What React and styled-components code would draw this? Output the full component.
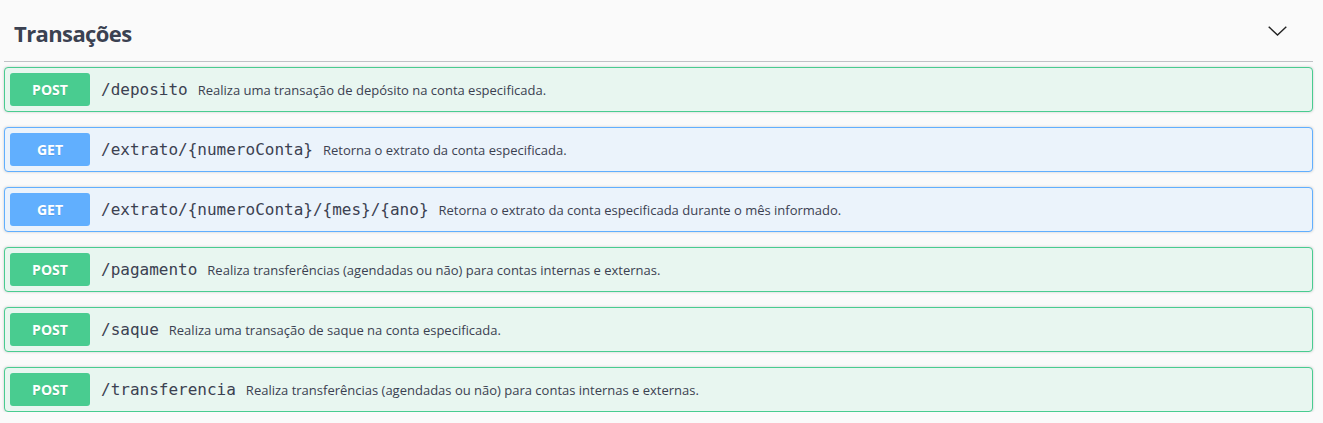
import React from "react";
import styled, { createGlobalStyle } from "styled-components";

const GlobalStyle = createGlobalStyle`
  html, body {
    margin: 0;
    padding: 0;
    background: #fafafa;
  }
  body {
    font-family: "Open Sans", "Noto Sans", sans-serif;
    color: #3b4151;
  }
`;

const colors = {
  POST: { main: "#49cc90", bg: "#e8f6f0" },
  GET: { main: "#61affe", bg: "#ebf3fb" },
};

const Section = styled.section`
  padding: 0 10px 0 4px;
`;

const TagHeader = styled.div`
  display: flex;
  align-items: center;
  justify-content: space-between;
  height: 61px;
  border-bottom: 1px solid rgba(59, 65, 81, 0.3);
  margin-bottom: 5px;
  padding: 0 26px 0 10px;
`;

const TagTitle = styled.h3`
  margin: 0;
  padding-top: 5px;
  font-size: 22px;
  font-weight: 700;
  letter-spacing: -0.6px;
  color: #3b4151;
`;

const Expand = styled.button`
  border: none;
  background: none;
  padding: 0;
  display: flex;
  margin-top: 1px;
`;

const OpList = styled.div`
  display: flex;
  flex-direction: column;
  gap: 15px;
`;

const OpBlock = styled.div`
  display: flex;
  align-items: center;
  height: 45px;
  box-sizing: border-box;
  padding: 5px;
  border: 1px solid ${(p) => colors[p.$method].main};
  border-radius: 4px;
  background: ${(p) => colors[p.$method].bg};
  box-shadow: 0 0 3px rgba(0, 0, 0, 0.19);
`;

const Method = styled.span`
  display: flex;
  align-items: center;
  justify-content: center;
  width: 80px;
  height: 33px;
  border-radius: 3px;
  background: ${(p) => colors[p.$method].main};
  color: #fff;
  font-size: 14px;
  font-weight: 700;
  text-shadow: 0 1px 0 rgba(0, 0, 0, 0.1);
`;

const Path = styled.span`
  padding: 0 10px 0 11px;
  font-family: "DejaVu Sans Mono", "Liberation Mono", monospace;
  font-size: 16px;
  color: #3b4151;
`;

const Description = styled.span`
  font-size: 13px;
  color: #3b4151;
`;

const ops = [
  { method: "POST", path: "/deposito", desc: "Realiza uma transação de depósito na conta especificada." },
  { method: "GET", path: "/extrato/{numeroConta}", desc: "Retorna o extrato da conta especificada." },
  { method: "GET", path: "/extrato/{numeroConta}/{mes}/{ano}", desc: "Retorna o extrato da conta especificada durante o mês informado." },
  { method: "POST", path: "/pagamento", desc: "Realiza transferências (agendadas ou não) para contas internas e externas." },
  { method: "POST", path: "/saque", desc: "Realiza uma transação de saque na conta especificada." },
  { method: "POST", path: "/transferencia", desc: "Realiza transferências (agendadas ou não) para contas internas e externas." },
];

export default function App() {
  return (
    <>
      <GlobalStyle />
      <Section>
        <TagHeader>
          <TagTitle>Transações</TagTitle>
          <Expand aria-label="collapse">
            <svg width="19" height="10" viewBox="0 0 19 10">
              <polyline points="0.7,0.7 9.5,9 18.3,0.7" fill="none" stroke="#222" strokeWidth="1.4" />
            </svg>
          </Expand>
        </TagHeader>
        <OpList>
          {ops.map((op) => (
            <OpBlock key={op.path} $method={op.method}>
              <Method $method={op.method}>{op.method}</Method>
              <Path>{op.path}</Path>
              <Description>{op.desc}</Description>
            </OpBlock>
          ))}
        </OpList>
      </Section>
    </>
  );
}
